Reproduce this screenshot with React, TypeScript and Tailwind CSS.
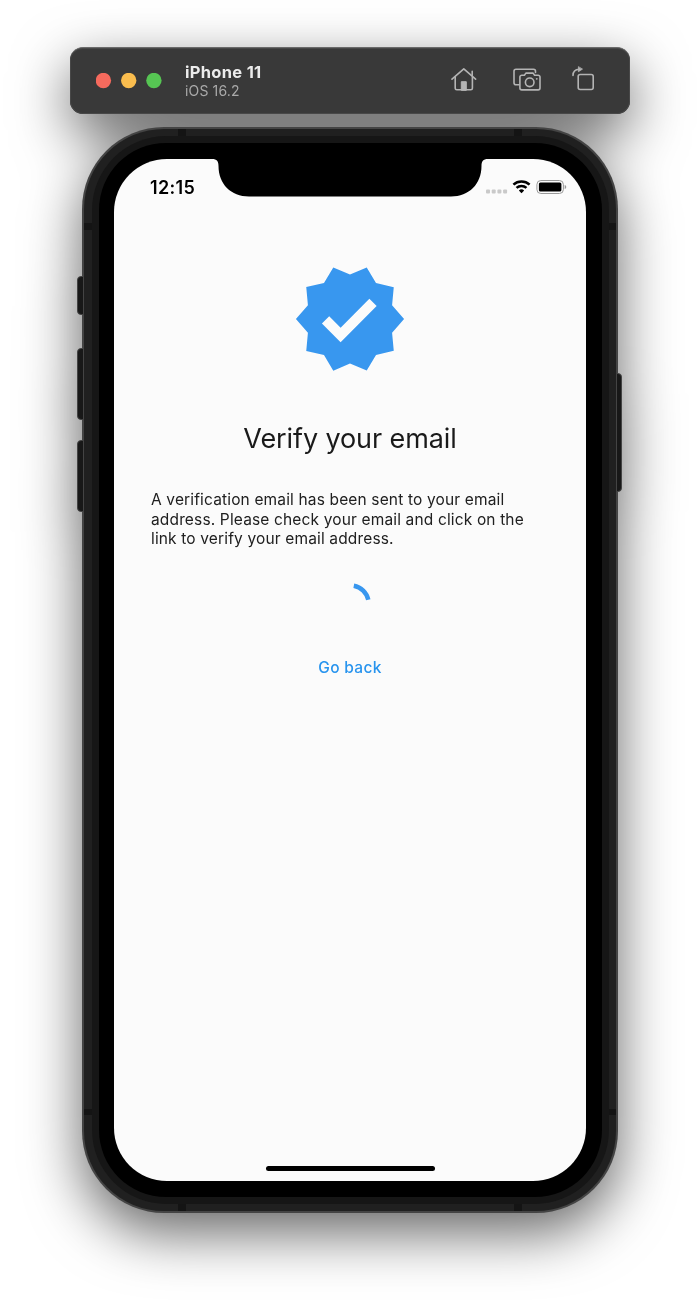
import React from "react";

function Toolbar() {
  return (
    <header className="flex h-[67px] w-[560px] items-center rounded-[13px] border-t border-[#6a6a6a] bg-[#393939] pl-[26px] shadow-[inset_0_0_0_1px_#484848] font-['Inter',sans-serif]">
      <svg className="h-[16px] w-[66px] shrink-0" viewBox="0 0 66 16">
        <circle cx="7.400" cy="7.500" r="7.700" fill="#f66a5d" />
        <circle cx="32.700" cy="7.500" r="7.700" fill="#fabd4e" />
        <circle cx="57.900" cy="7.500" r="7.700" fill="#56c553" />
      </svg>
      <div className="ml-[23px] w-[266px] shrink-0">
        <div className="text-[16.5px] leading-[19px] font-bold tracking-[0.3px] text-[#ececec]">iPhone 11</div>
        <div className="text-[14px] leading-[18px] tracking-[0.15px] text-[#a9a9a9]">iOS 16.2</div>
      </div>
      <svg className="-mt-[2px] h-[30px] w-[150px] shrink-0" viewBox="0 0 150 30" fill="none" stroke="#b4b4b4" strokeWidth="1.6" strokeLinecap="round" strokeLinejoin="round">
        <path d="M1 14.2 12.8 3.8 24.6 14.2" />
        <path d="M4.2 12v11.2a1.600 1.600 0 0 0 1.600 1.600h14a1.600 1.600 0 0 0 1.600-1.600V12M21.200 10.500V6.200" />
        <path d="M10.300 25v-8.300h5V25z" fill="#b4b4b4" strokeWidth="1" />
        <path d="M68 19.700h-3a2 2 0 0 1-2-2V6.200a2 2 0 0 1 2-2h17.500a2 2 0 0 1 2 2v1.200" />
        <path d="M70.800 10.200h2.600l1.500-2.100h7.200l1.500 2.100h3.500a1.900 1.900 0 0 1 1.900 1.900v10.900a1.900 1.900 0 0 1-1.900 1.900H70.800a1.900 1.900 0 0 1-1.900-1.900V12.100a1.900 1.900 0 0 1 1.900-1.900z" />
        <circle cx="78.700" cy="17.300" r="4.300" />
        <circle cx="85.600" cy="13.900" r=".4" strokeWidth="1" />
        <rect x="127.200" y="9.500" width="15" height="15" rx="2" />
        <path d="M122 10.500c0-4 2.200-6 6.200-6.200" />
        <path d="M127.400 2v4.700l3.800-2.400z" fill="#b4b4b4" strokeWidth=".8" />
      </svg>
    </header>
  );
}

function StatusBar() {
  return (
    <div className="flex h-[57px] items-center pl-[36px]">
      <span className="w-[335.500px] text-[18px] leading-[20px] font-semibold tracking-[0.350px] text-black">12:15</span>
      <svg className="-mt-[2px] h-[16px] w-[82px]" viewBox="0 0 82 16">
        <g fill="#c9c9c9">
          <rect x="0" y="10.500" width="4" height="4" rx="1" />
          <rect x="5.700" y="10.500" width="4" height="4" rx="1" />
          <rect x="11.400" y="10.500" width="4" height="4" rx="1" />
          <rect x="17.100" y="10.500" width="4" height="4" rx="1" />
        </g>
        <g fill="none" stroke="#000" strokeWidth="2.500">
          <path d="M27.400 5.700a12 12 0 0 1 16.200 0" />
          <path d="M30.500 8.900a7.400 7.400 0 0 1 10 0" />
        </g>
        <path d="M32.800 11.500a4 4 0 0 1 5.400 0l-2.700 2.800z" />
        <rect x="50.900" y="1.500" width="26.500" height="13" rx="4" fill="none" stroke="#999" strokeWidth="1" />
        <rect x="52.900" y="3.500" width="22.500" height="9" rx="1.500" />
        <path d="M78.700 6c2 .5 2 3.500 0 4z" fill="#999" />
      </svg>
    </div>
  );
}

function Screen() {
  return (
    <main className="relative flex h-[1022px] w-[472px] flex-col overflow-hidden rounded-[53px] bg-[#fbfbfb] font-['Inter',sans-serif]">
      <StatusBar />
      <svg className="absolute top-0 left-[98px] h-[38px] w-[276px]" viewBox="0 0 276 38">
        <path d="M0 0C5 0 6.500 2.500 6.500 7C6.500 25 19 37.500 37 37.500H239C257 37.500 269.500 25 269.500 7C269.500 2.500 271 0 276 0Z" />
      </svg>
      <div className="flex flex-col items-center pt-[43.500px]">
        <svg className="size-[118px]" viewBox="0 0 24 24">
          <path fill="#3897ef" d="M23 12l-2.440-2.790.340-3.690-3.610-.820-1.890-3.200L12 2.960 8.600 1.500 6.710 4.690 3.100 5.500l.340 3.700L1 12l2.440 2.790-.340 3.700 3.610.820L8.600 22.500l3.400-1.470 3.400 1.460 1.890-3.190 3.610-.820-.340-3.690L23 12zM10.090 16.720l-3.800-3.810 1.480-1.480 2.320 2.330 5.850-5.870 1.480 1.480-7.330 7.350z" />
        </svg>
        <h1 className="mt-[44.500px] text-[27px] leading-[34px] font-normal tracking-[-0.100px] whitespace-nowrap text-[#1a1a1a]">Verify your email</h1>
        <p className="mt-[34px] w-[398px] text-[15.500px] leading-[19.500px] tracking-[0.150px] whitespace-nowrap text-[#202020]">
          A verification email has been sent to your email
          <br />
          address. Please check your email and click on the
          <br />
          link to verify your email address.
        </p>
        <svg className="mt-[34.500px] size-[41px]" viewBox="0 0 41 41" fill="none" stroke="#3897ef" strokeWidth="4.500">
          <path d="M23.800 2.700A18.200 18.200 0 0 1 38.300 16.800" />
        </svg>
        <button className="mt-[33.500px] text-[15.500px] leading-[20px] font-medium tracking-[0.300px] whitespace-nowrap text-[#2894ee]">Go back</button>
      </div>
      <div className="mx-auto mt-auto mb-[10px] h-[5.500px] w-[169px] rounded-full bg-black" />
    </main>
  );
}

function Phone() {
  return (
    <section className="relative mt-[13px] flex h-[1086px] w-[536px] items-center justify-center rounded-[82px] bg-[#444444]">
      <i className="absolute top-[149px] -left-[5px] h-[39px] w-[7px] rounded-l-[4px] border border-[#444] bg-[#181818]" />
      <i className="absolute top-[221px] -left-[5px] h-[72px] w-[7px] rounded-l-[4px] border border-[#444] bg-[#181818]" />
      <i className="absolute top-[313px] -left-[5px] h-[72px] w-[7px] rounded-l-[4px] border border-[#444] bg-[#181818]" />
      <i className="absolute top-[246px] -right-[4px] h-[119px] w-[6px] rounded-r-[4px] border border-[#444] bg-[#181818]" />
      <div className="relative flex h-[1082px] w-[532px] items-center justify-center rounded-[80px] bg-[#202020]">
        <i className="absolute top-0 left-[94px] h-2 w-[8px] bg-[#141414]" />
        <i className="absolute top-0 right-[94px] h-2 w-[8px] bg-[#141414]" />
        <i className="absolute bottom-0 left-[94px] h-2 w-[8px] bg-[#141414]" />
        <i className="absolute right-[94px] bottom-0 h-2 w-[8px] bg-[#141414]" />
        <i className="absolute top-[94px] left-0 h-[7px] w-2 bg-[#141414]" />
        <i className="absolute top-[94px] right-0 h-[7px] w-2 bg-[#141414]" />
        <i className="absolute bottom-[96px] left-0 h-[6px] w-2 bg-[#141414]" />
        <i className="absolute right-0 bottom-[96px] h-[6px] w-2 bg-[#141414]" />
        <div className="relative flex h-[1068px] w-[517px] items-center justify-center rounded-[74px] bg-[#161616]">
          <div className="flex h-[1054px] w-[503px] items-center justify-center rounded-[67px] bg-black">
            <Screen />
          </div>
        </div>
      </div>
    </section>
  );
}

export default function App() {
  return (
    <div className="h-[1307px] w-[700px] overflow-hidden bg-white pt-[47px]">
      <div className="flex flex-col items-center drop-shadow-[0_20px_28px_rgba(0,0,0,0.6)]">
        <Toolbar />
        <Phone />
      </div>
    </div>
  );
}
